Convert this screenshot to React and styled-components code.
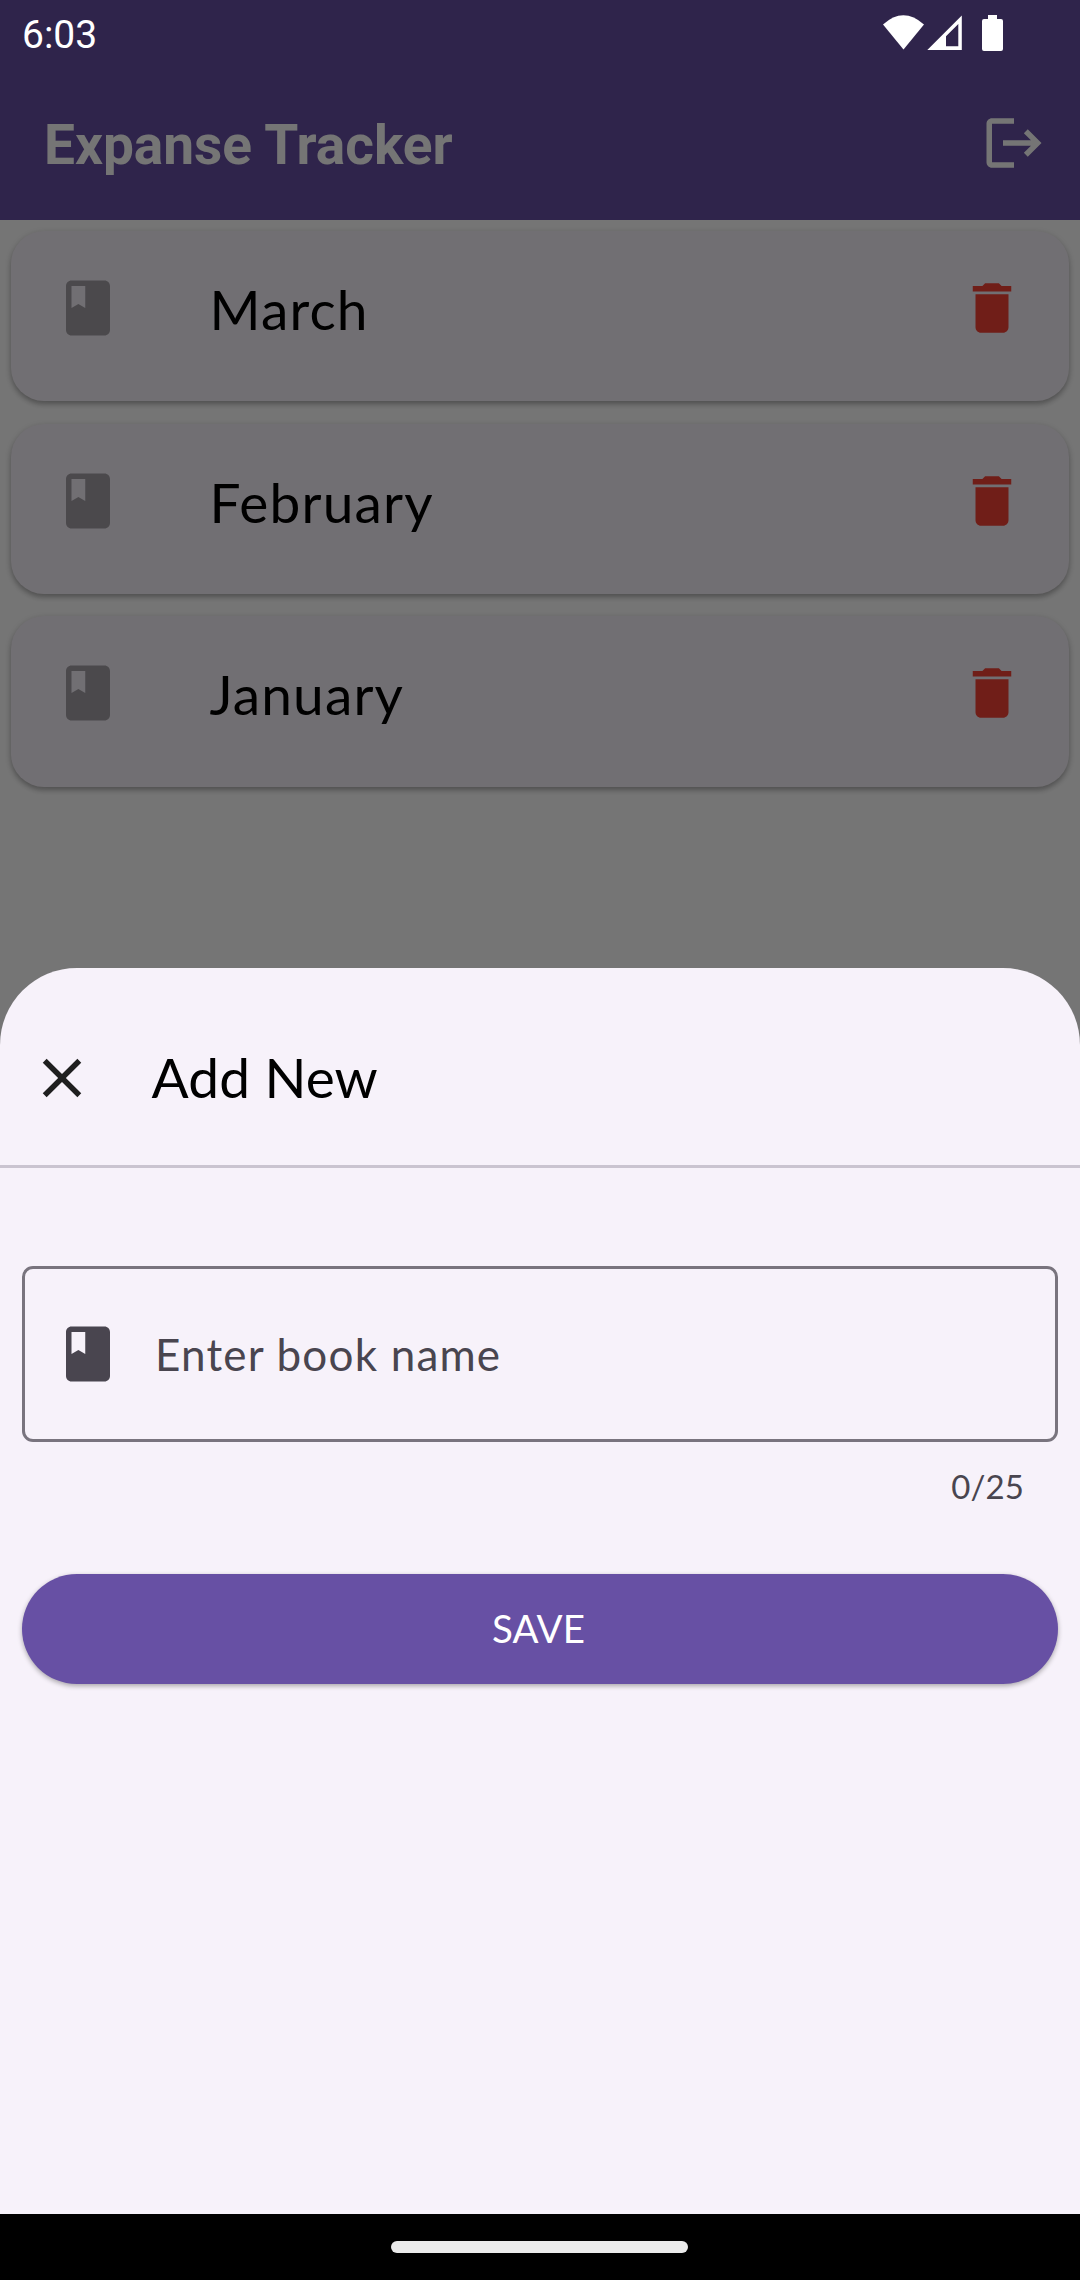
import React from "react";
import styled, { createGlobalStyle } from "styled-components";

const GlobalStyle = createGlobalStyle`
  *, *::before, *::after { box-sizing: border-box; }
  body { margin: 0; background: #fff; }
`;

const Device = styled.div`
  position: relative;
  display: flex;
  flex-direction: column;
  width: 1080px;
  height: 2280px;
  overflow: hidden;
  background: #fff;
  font-family: Lato, "Liberation Sans", sans-serif;
  color: #000;
`;

const AppBar = styled.header`
  display: flex;
  align-items: center;
  justify-content: space-between;
  height: 220px;
  padding: 66px 33.5px 0 44px;
  background: #6750a4;
  color: #fff;
`;

const AppTitle = styled.h1`
  margin: 0;
  padding-top: 3px;
  font: 700 55px/64px Roboto, sans-serif;
  letter-spacing: 0;
  white-space: nowrap;
`;

const BookList = styled.ul`
  display: flex;
  flex-direction: column;
  gap: 22.2px;
  margin: 0;
  padding: 11px;
  list-style: none;
`;

const BookCard = styled.li`
  display: flex;
  align-items: center;
  height: 170.4px;
  padding: 0 44px 16.4px;
  border-radius: 33px;
  background: #f7f2fa;
  box-shadow:
    0 3px 5px rgba(0, 0, 0, 0.24),
    0 2px 8px rgba(0, 0, 0, 0.12);
`;

const BookName = styled.span`
  flex: 1;
  padding: 2px 0 0 88.5px;
  font-size: 55px;
  line-height: 66px;
  letter-spacing: 1.15px;
`;

const Icon = styled.svg`
  display: block;
  flex: none;
  width: 66px;
  height: 66px;
  fill: ${(p) => p.$color || "currentColor"};
`;

const Scrim = styled.div`
  position: absolute;
  inset: 0;
  display: flex;
  flex-direction: column;
  background: rgba(0, 0, 0, 0.54);
`;

const StatusBar = styled.div`
  display: flex;
  align-items: center;
  justify-content: space-between;
  height: 66px;
  padding: 0 76px 0 22px;
  color: #fff;
`;

const Clock = styled.span`
  padding-top: 4px;
  font: 400 39px/46px Roboto, sans-serif;
`;

const StatusIcons = styled.svg`
  display: block;
  width: 122px;
  height: 66px;
  fill: #fff;
`;

const Sheet = styled.section`
  display: flex;
  flex-direction: column;
  flex: 1;
  margin-top: 902.4px;
  border-radius: 77px 77px 0 0;
  background: #f7f2fa;
`;

const SheetHeader = styled.div`
  display: flex;
  align-items: center;
  gap: 57px;
  height: 199.6px;
  padding: 22px 28.5px 0;
  border-bottom: 3px solid #cac4d0;
`;

const SheetTitle = styled.h2`
  margin: 0;
  padding-bottom: 2px;
  font-size: 55px;
  font-weight: 400;
  line-height: 66px;
  letter-spacing: 0.15px;
`;

const Form = styled.div`
  display: flex;
  flex-direction: column;
  padding: 98px 22px 0;
`;

const Field = styled.div`
  display: flex;
  align-items: center;
  gap: 34px;
  height: 176px;
  padding: 0 30px;
  border: 3px solid #79747e;
  border-radius: 11px;
  color: #49454f;
`;

const Placeholder = styled.span`
  font-size: 44px;
  line-height: 66px;
  letter-spacing: 1.2px;
`;

const Counter = styled.span`
  align-self: flex-end;
  margin: 22px 34px 0 0;
  font-size: 33px;
  line-height: 44px;
  letter-spacing: 0.1px;
  color: #49454f;
`;

const SaveButton = styled.button`
  height: 110px;
  margin-top: 65.6px;
  padding: 0 3px 1px 0;
  border: 0;
  border-radius: 55px;
  background: #6750a4;
  color: #fff;
  font: 400 38.5px/55px Lato, sans-serif;
  letter-spacing: 0.1px;
  box-shadow: 0 2px 5px rgba(0, 0, 0, 0.32);
`;

const NavBar = styled.nav`
  display: flex;
  align-items: center;
  justify-content: center;
  height: 66px;
  padding-right: 2px;
  background: #000;
`;

const NavHandle = styled.div`
  width: 297px;
  height: 12px;
  border-radius: 6px;
  background: #ebebeb;
`;

const ICONS = {
  book: "M18 2H6c-1.1 0-2 .9-2 2v16c0 1.1.9 2 2 2h12c1.1 0 2-.9 2-2V4c0-1.1-.9-2-2-2zM6 4h5v8l-2.500-1.500L6 12V4z",
  trash: "M6 19c0 1.100.9 2 2 2h8c1.100 0 2-.9 2-2V7H6v12zM19 4h-3.500l-1-1h-5l-1 1H5v2h14V4z",
  logout:
    "M17 7l-1.410 1.410L18.170 11H8v2h10.170l-2.580 2.580L17 17l5-5zM4 5h8V3H4c-1.100 0-2 .9-2 2v14c0 1.100.9 2 2 2h8v-2H4V5z",
  close:
    "M19 6.410L17.590 5 12 10.590 6.410 5 5 6.410 10.590 12 5 17.590 6.410 19 12 13.410 17.590 19 19 17.590 13.410 12z",
};

function Glyph({ name, color }) {
  return (
    <Icon viewBox="0 0 24 24" $color={color} aria-hidden="true">
      <path d={ICONS[name]} />
    </Icon>
  );
}

const BOOKS = ["March", "February", "January"];

export default function App() {
  return (
    <>
      <GlobalStyle />
      <Device>
        <AppBar>
          <AppTitle>Expanse Tracker</AppTitle>
          <Glyph name="logout" />
        </AppBar>
        <BookList>
          {BOOKS.map((book) => (
            <BookCard key={book}>
              <Glyph name="book" color="#a4a0a7" />
              <BookName>{book}</BookName>
              <Glyph name="trash" color="#f44336" />
            </BookCard>
          ))}
        </BookList>
        <Scrim>
          <StatusBar>
            <Clock>6:03</Clock>
            <StatusIcons viewBox="0 0 122 66" aria-hidden="true">
              <path d="M1 24.500Q21.300 6 42 24.500L21.500 49.500Z" />
              <path
                fillRule="evenodd"
                d="M45.300 50L79.800 15.500V50ZM64 46.300H76.300V24L64 36.300Z"
              />
              <path d="M106 15h9v4h4q2 0 2 2v28q0 2-2 2h-17q-2 0-2-2V21q0-2 2-2h4z" />
            </StatusIcons>
          </StatusBar>
          <Sheet>
            <SheetHeader>
              <Glyph name="close" color="#1f1f1f" />
              <SheetTitle>Add New</SheetTitle>
            </SheetHeader>
            <Form>
              <Field>
                <Glyph name="book" />
                <Placeholder>Enter book name</Placeholder>
              </Field>
              <Counter>0/25</Counter>
              <SaveButton type="button">SAVE</SaveButton>
            </Form>
          </Sheet>
          <NavBar>
            <NavHandle />
          </NavBar>
        </Scrim>
      </Device>
    </>
  );
}
